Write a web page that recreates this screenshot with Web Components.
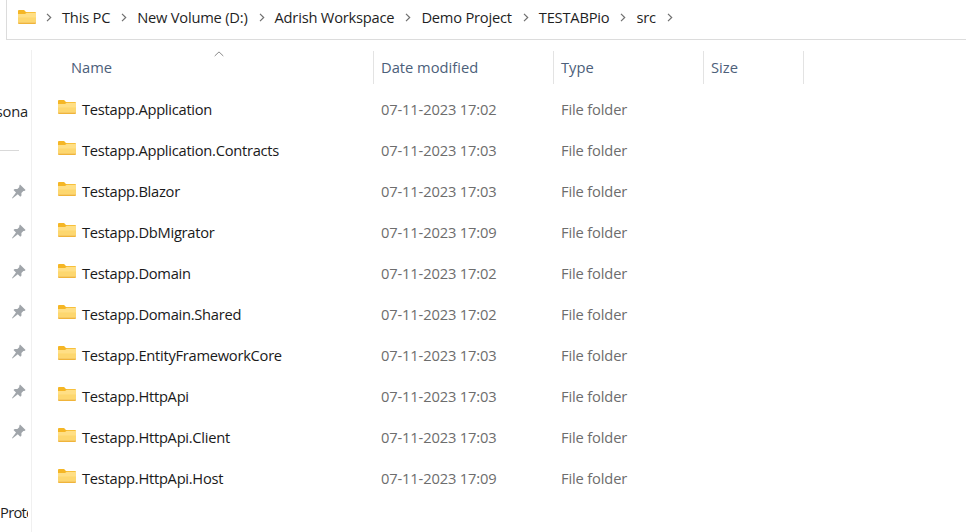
<!DOCTYPE html>
<html lang="en"><head><meta charset="utf-8"><title>src</title>
<style>
html,body{margin:0;padding:0;background:#fff;height:100%;overflow:hidden}
body{font-family:"Open Sans","Noto Sans",sans-serif;font-size:14.7px}
fe-window{height:532px}
</style></head><body>
<fe-window>
  <fe-breadcrumb>
    <fe-crumb>This PC</fe-crumb><fe-crumb>New Volume (D:)</fe-crumb><fe-crumb>Adrish Workspace</fe-crumb><fe-crumb>Demo Project</fe-crumb><fe-crumb>TESTABPio</fe-crumb><fe-crumb>src</fe-crumb><fe-crumb></fe-crumb>
  </fe-breadcrumb>
  <fe-main>
    <fe-nav></fe-nav>
    <fe-list>
      <fe-row name="Testapp.Application" date="07-11-2023 17:02"></fe-row>
      <fe-row name="Testapp.Application.Contracts" date="07-11-2023 17:03"></fe-row>
      <fe-row name="Testapp.Blazor" date="07-11-2023 17:03"></fe-row>
      <fe-row name="Testapp.DbMigrator" date="07-11-2023 17:09"></fe-row>
      <fe-row name="Testapp.Domain" date="07-11-2023 17:02"></fe-row>
      <fe-row name="Testapp.Domain.Shared" date="07-11-2023 17:02"></fe-row>
      <fe-row name="Testapp.EntityFrameworkCore" date="07-11-2023 17:03"></fe-row>
      <fe-row name="Testapp.HttpApi" date="07-11-2023 17:03"></fe-row>
      <fe-row name="Testapp.HttpApi.Client" date="07-11-2023 17:03"></fe-row>
      <fe-row name="Testapp.HttpApi.Host" date="07-11-2023 17:09"></fe-row>
    </fe-list>
  </fe-main>
</fe-window>
<script>
const FOLDER=`<svg width="18" height="14" viewBox="0 0 19 15" preserveAspectRatio="none" aria-hidden="true">
<path d="M0 1a1 1 0 0 1 1-1h5.4l2 2.2H18a1 1 0 0 1 1 1V6H0z" fill="#f5b625"/>
<path d="M0 4.4h7.4L9.2 3H19v10.2H0z" fill="#ffdf85"/>
<path d="M0 8h19v5.6H0z" fill="#fdd76f"/>
<path d="M0 13.4h19V14a1 1 0 0 1-1 1H1a1 1 0 0 1-1-1z" fill="#f0b43a"/>
</svg>`;
const CHEV=`<svg width="6" height="9" viewBox="0 0 6 9" aria-hidden="true"><path d="M1 .8 4.7 4.5 1 8.2" fill="none" stroke="#6f6f6f" stroke-width="1.2"/></svg>`;
const PIN=`<svg width="15" height="15" viewBox="0 0 15 15" aria-hidden="true"><path d="M9 .4 14.6 6l-1.2 1.1-1-.2-2 2 .1 2.7-1.2 1.2-2.5-2.5L1.4 14.4 1 14l4-5.4-2.5-2.5 1.2-1.2 2.7.1 2-2-.2-1z" fill="#a0a5aa"/></svg>`;
function def(name,html){customElements.define(name,class extends HTMLElement{
  constructor(){super();this.attachShadow({mode:"open"}).innerHTML=typeof html==="function"?html(this):html}
})}
def("fe-window",`<style>:host{display:flex;flex-direction:column;overflow:hidden;width:966px}</style><slot></slot>`);
def("fe-breadcrumb",`<style>:host{display:flex;align-items:center;height:39px;margin-left:6px;padding-left:11px;border:solid #dcdcdc;border-width:0 0 1px 1px;flex:none}
.f{display:flex;margin-right:10px;margin-top:-5px}
.l{display:flex;align-items:center;margin-top:-5px}</style><span class="f">${FOLDER}</span><span class="l"><slot></slot></span>`);
def("fe-crumb",`<style>:host{display:inline-flex;align-items:center;color:#1f1f1f;font-size:14.7px;letter-spacing:-.22px;white-space:nowrap}
.c{display:flex;margin-right:10px}.t{margin-right:11px}</style><span class="c">${CHEV}</span><span class="t"><slot></slot></span>`);
def("fe-main",`<style>:host{display:flex;flex:1;min-height:0;padding-top:10px}</style><slot></slot>`);
def("fe-nav",`<style>:host{display:flex;flex-direction:column;width:31px;flex:none;border-right:1px solid #f0f0f0;overflow:hidden;color:#1f1f1f;height:482px}
.t{width:28px;overflow:hidden;white-space:nowrap;font-size:14.7px;letter-spacing:-.2px;height:20px;line-height:20px;flex:none}
.a{margin-top:51px;direction:rtl}
.d{width:19px;height:1px;background:#d9d9d9;margin-top:29px;flex:none}
.p{display:flex;flex-direction:column;gap:25px;margin:33px 0 0 11px;flex:none}
.p svg{display:block}
.b{margin-top:63px;letter-spacing:-.7px}</style>
<div class="t a">Persona</div><div class="d"></div>
<div class="p">${PIN.repeat(7)}</div>
<div class="t b">Protected</div>`);
def("fe-list",`<style>:host{display:block;flex:1;min-width:0}
.h{display:grid;grid-template-columns:342px 180px 150px 100px;height:33px;margin-top:1px;position:relative;color:#4c607a;font-size:14.7px;letter-spacing:0}
.h div{border-right:1px solid #e3e3e3;display:flex;align-items:center;padding-left:7px;box-sizing:border-box;padding-bottom:1px}
.h div.nm{padding-left:39px}
.caret{position:absolute;left:182px;top:0;display:block}
.r{padding-top:4px;display:block}</style>
<div class="h"><svg class="caret" width="10" height="6" viewBox="0 0 10 6"><path d="M.7 5 5 .9 9.3 5" fill="none" stroke="#8a8a8a" stroke-width="1"/></svg><div class="nm">Name</div><div>Date modified</div><div>Type</div><div>Size</div></div>
<div class="r"><slot></slot></div>`);
def("fe-row",e=>`<style>:host{display:grid;grid-template-columns:342px 180px 150px;height:41px;align-items:center;font-size:14.7px;letter-spacing:-.27px;white-space:nowrap}
.n{display:flex;align-items:center;padding-left:26px;color:#1a1a1a}
.n svg{display:block;margin:-3px 6px 0 0}
.m{color:#6d6d6d;padding-left:7px;letter-spacing:-.15px}</style>
<div class="n">${FOLDER}<span>${e.getAttribute("name")}</span></div><div class="m">${e.getAttribute("date")}</div><div class="m">File folder</div>`);
</script>
</body></html>
